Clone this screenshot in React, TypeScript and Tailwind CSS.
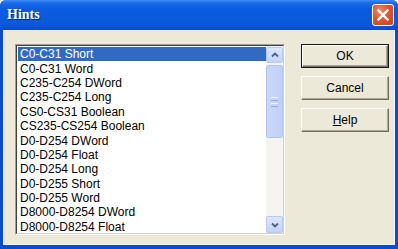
import React from "react";

const items = [
  "C0-C31 Short",
  "C0-C31 Word",
  "C235-C254 DWord",
  "C235-C254 Long",
  "CS0-CS31 Boolean",
  "CS235-CS254 Boolean",
  "D0-D254 DWord",
  "D0-D254 Float",
  "D0-D254 Long",
  "D0-D255 Short",
  "D0-D255 Word",
  "D8000-D8254 DWord",
  "D8000-D8254 Float",
];

function Btn({ children, def }: { children: React.ReactNode; def?: boolean }) {
  return (
    <div
      className={
        "h-[24px] w-[88px] flex items-center justify-center text-[12px] text-black " +
        (def ? "border border-[#1a1a1a]" : "")
      }
    >
      <div className="w-full h-full flex items-center justify-center bg-[#ECE9D8] border border-t-white border-l-white border-b-[#716F64] border-r-[#716F64] shadow-[inset_-1px_-1px_0_#ACA899]">
        {children}
      </div>
    </div>
  );
}

export default function App() {
  return (
    <div
      className="w-[398px] h-[249px] flex flex-col overflow-hidden bg-[#0A4BD6] rounded-t-[6px]"
      style={{ fontFamily: '"Liberation Sans", Arial, sans-serif' }}
    >
      {/* title bar */}
      <div className="h-[30px] shrink-0 flex items-center pl-[7px] pr-[4px] bg-[linear-gradient(to_bottom,#3E8DF5_0%,#1A6AE8_10%,#0A5CE0_30%,#0A5ADD_70%,#0B55D6_90%,#0A48C8_100%)]">
        <span
          className="text-white font-bold text-[14px] leading-none [text-shadow:1px_1px_0_#0A1E7A]"
          style={{ fontFamily: '"Liberation Serif", "Times New Roman", serif' }}
        >
          Hints
        </span>
        <div className="ml-auto mr-[0px] w-[22px] h-[22px] rounded-[3px] border border-white bg-[radial-gradient(circle_at_35%_30%,#F08A6A_0%,#E2552E_45%,#C9401D_100%)] flex items-center justify-center">
          <svg width="14" height="14" viewBox="0 0 14 14">
            <path d="M2.5 2.5 L11.5 11.5 M11.5 2.5 L2.5 11.5" stroke="white" strokeWidth="2.4" strokeLinecap="square" />
          </svg>
        </div>
      </div>
      {/* client */}
      <div className="flex-1 mx-[3px] mb-[4px] bg-[#ECE9D8] flex pl-[12px] pr-[5px] pt-[14px] gap-[16px] border-b border-r border-[#F8F7F2]">
        {/* listbox */}
        <div className="w-[271px] h-[191px] border border-t-[#A0A0A0] border-l-[#A0A0A0] border-b-white border-r-white">
          <div className="w-full h-full border border-t-[#404040] border-l-[#404040] border-b-[#D4D0C8] border-r-[#D4D0C8] bg-white flex">
            <div className="flex-1 flex flex-col pt-[1px] pl-[1px] overflow-hidden">
              {items.map((t, i) => (
                <div
                  key={t}
                  className={
                    "h-[14.4px] shrink-0 flex items-center pl-[2px] text-[12px] leading-none whitespace-nowrap " +
                    (i === 0 ? "bg-[#316AC5] text-white" : "text-black")
                  }
                >
                  {t}
                </div>
              ))}
            </div>
            {/* scrollbar */}
            <div className="w-[17px] flex flex-col bg-[#F5F4EF] pt-[1px]">
              <div className="h-[16px] rounded-[2px] border border-[#B7CBF6] bg-[linear-gradient(to_bottom,#DCE6FD,#C2D3FC)] flex items-center justify-center">
                <svg width="8" height="6" viewBox="0 0 8 6">
                  <path d="M1 4.5 L4 1.5 L7 4.5" stroke="#4D6185" strokeWidth="1.8" fill="none" />
                </svg>
              </div>
              <div className="mt-[2px] h-[73px] rounded-[2px] border border-[#B1C5F3] bg-[linear-gradient(to_right,#C9D8FC,#BFD0FB)] flex flex-col items-center justify-center gap-[2px]">
                <div className="w-[7px] h-[1px] bg-[#EEF3FE]" />
                <div className="w-[7px] h-[1px] bg-[#8CB0F8]" />
                <div className="w-[7px] h-[1px] bg-[#EEF3FE]" />
                <div className="w-[7px] h-[1px] bg-[#8CB0F8]" />
              </div>
              <div className="flex-1" />
              <div className="h-[17px] rounded-[2px] border border-[#B7CBF6] bg-[linear-gradient(to_bottom,#DCE6FD,#C2D3FC)] flex items-center justify-center">
                <svg width="8" height="6" viewBox="0 0 8 6">
                  <path d="M1 1.5 L4 4.5 L7 1.5" stroke="#4D6185" strokeWidth="1.8" fill="none" />
                </svg>
              </div>
            </div>
          </div>
        </div>
        {/* buttons */}
        <div className="flex flex-col gap-[8px]">
          <Btn def>OK</Btn>
          <Btn>Cancel</Btn>
          <Btn>
            <span>
              <span className="underline">H</span>elp
            </span>
          </Btn>
        </div>
      </div>
    </div>
  );
}
